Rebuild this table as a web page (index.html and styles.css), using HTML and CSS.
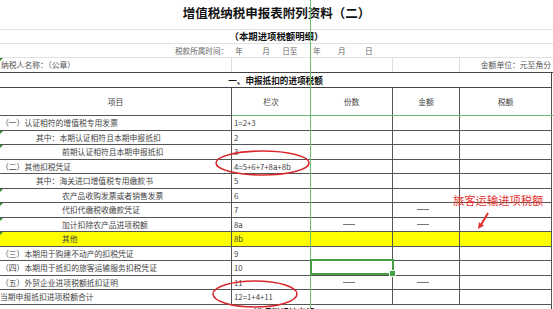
FILE: index.html
```html
<!DOCTYPE html>
<html lang="zh">
<head>
<meta charset="utf-8">
<link rel="stylesheet" href="styles.css">
</head>
<body>
<div class="page">
  <div class="title">增值税纳税申报表附列资料（二）</div>
  <div class="subtitle">（本期进项税额明细）</div>
  <div class="period">
    <span>税款所属时间：</span><span class="p1">年</span><span class="p2">月</span><span class="p3">日至</span><span class="p4">年</span><span class="p5">月</span><span class="p6">日</span>
  </div>
  <div class="info">
    <div class="mark">纳税人名称：（公章）</div>
    <div></div>
    <div></div>
    <div class="right">金额单位：元至角分</div>
  </div>
  <div class="section">一、申报抵扣的进项税额</div>
  <div class="table">
    <div class="hd">项目</div><div class="hd">栏次</div><div class="hd">份数</div><div class="hd">金额</div><div class="hd">税额</div>

    <div class="l0">（一）认证相符的增值税专用发票</div><div class="no">1=2+3</div><div></div><div></div><div></div>
    <div class="l1 mark">其中：本期认证相符且本期申报抵扣</div><div class="no">2</div><div></div><div></div><div></div>
    <div class="l2 mark">前期认证相符且本期申报抵扣</div><div class="no">3</div><div></div><div></div><div></div>
    <div class="l0">（二）其他扣税凭证</div><div class="no">4=5+6+7+8a+8b</div><div></div><div></div><div></div>
    <div class="l1">其中：海关进口增值税专用缴款书</div><div class="no">5</div><div></div><div></div><div></div>
    <div class="l2 mark">农产品收购发票或者销售发票</div><div class="no">6</div><div></div><div></div><div></div>
    <div class="l2 mark">代扣代缴税收缴款凭证</div><div class="no">7</div><div></div><div class="c"><span class="dash"></span></div><div></div>
    <div class="l2 mark">加计扣除农产品进项税额</div><div class="no">8a</div><div class="c"><span class="dash"></span></div><div class="c"><span class="dash"></span></div><div></div>
    <div class="l2 mark y">其他</div><div class="no y">8b</div><div class="y"></div><div class="y"></div><div class="y"></div>
    <div class="l0">（三）本期用于购建不动产的扣税凭证</div><div class="no">9</div><div></div><div></div><div></div>
    <div class="l0">（四）本期用于抵扣的旅客运输服务扣税凭证</div><div class="no">10</div><div></div><div></div><div></div>
    <div class="l0">（五）外贸企业进项税额抵扣证明</div><div class="no">11</div><div class="c"><span class="dash"></span></div><div class="c"><span class="dash"></span></div><div></div>
    <div class="lt">当期申报抵扣进项税额合计</div><div class="no">12=1+4+11</div><div></div><div></div><div></div>
  </div>
  <div class="section">二、进项税额转出额</div>

  <div class="freeze-v"></div>
  <div class="freeze-h"></div>
  <div class="selected"></div>
  <div class="note">旅客运输进项税额</div>
  <svg class="marks" width="553" height="309" viewBox="0 0 553 309">
    <ellipse cx="262.5" cy="163" rx="46.5" ry="12" fill="none" stroke="#d8282c" stroke-width="1.6"/>
    <ellipse cx="255" cy="294" rx="42" ry="13" fill="none" stroke="#d8282c" stroke-width="1.6"/>
    <line x1="488" y1="213" x2="481.5" y2="224" stroke="#e0302c" stroke-width="2"/>
    <polygon points="478,229 484,225.5 479,222.3" fill="#e0302c"/>
  </svg>
</div>
</body>
</html>
```
FILE: styles.css
```css
* { box-sizing: border-box; margin: 0; padding: 0; }
body {
  margin: 0;
  background: #fff;
  font-family: "Noto Sans CJK SC", "Noto Sans", sans-serif;
  color: #444;
}
.page {
  position: relative;
  width: 553px;
  height: 309px;
  overflow: hidden;
}
.title {
  height: 30px;
  border-bottom: 1px solid #e2e2e2;
  text-align: center;
  font-size: 12.5px;
  font-weight: 700;
  line-height: 26px;
  color: #111;
}
.subtitle {
  height: 14px;
  border-bottom: 1px solid #e2e2e2;
  text-align: center;
  font-size: 9.4px;
  font-weight: 700;
  line-height: 13px;
  color: #111;
}
.period {
  position: relative;
  height: 14px;
  border-bottom: 1px solid #e2e2e2;
  display: flex;
  padding-left: 175px;
  font-size: 7.6px;
  line-height: 14px;
  color: #666;
}
.period .p1 { margin-left: 7px; }
.period .p2 { margin-left: 19.4px; }
.period .p3 { margin-left: 12.4px; }
.period .p4 { margin-left: 15.8px; }
.period .p5 { margin-left: 17.4px; }
.period .p6 { margin-left: 19.4px; }
.info {
  display: grid;
  grid-template-columns: 232px 161px 67px 92px;
  height: 15px;
  border-bottom: 1px solid #444;
}
.info > div {
  position: relative;
  border-right: 1px solid #ddd;
  font-size: 7.8px;
  line-height: 14px;
  padding-left: 1px;
  white-space: nowrap;
  color: #555;
}
.info > div.right { text-align: right; padding-right: 1px; border-right: none; }
.section {
  width: 552px;
  height: 15px;
  border-bottom: 1px solid #444;
  border-right: 1px solid #444;
  text-align: center;
  font-weight: 700;
  font-size: 8.6px;
  line-height: 14px;
  color: #111;
}
.table {
  display: grid;
  grid-template-columns: 232px 79px 82px 67px 92px;
  grid-template-rows: 28px;
  grid-auto-rows: 14.5px;
}
.table > div {
  position: relative;
  border-right: 1px solid #555;
  border-bottom: 1px solid #555;
  font-size: 7.8px;
  line-height: 13.5px;
  white-space: nowrap;
  color: #444;
}
.table > div.hd {
  text-align: center;
  line-height: 27px;
}
.l0 { padding-left: 1px; }
.l1 { padding-left: 36px; }
.l2 { padding-left: 62px; }
.lt { padding-left: 0; }
.no { padding-left: 2px; }
.y { background: #ffff00; }
.c { display: flex; align-items: center; justify-content: center; }
.dash {
  display: block;
  width: 12px;
  height: 1px;
  background: #777;
  margin-left: -6px;
}
.mark::before {
  content: "";
  position: absolute;
  left: 0;
  top: 0;
  border-top: 3px solid #2e8b2e;
  border-right: 3px solid transparent;
}
.freeze-v {
  position: absolute;
  left: 310px;
  top: 0;
  width: 1px;
  height: 309px;
  background: #6dbb6d;
}
.freeze-h {
  position: absolute;
  left: 232px;
  top: 115px;
  width: 321px;
  height: 1px;
  background: #6dbb6d;
}
.selected {
  position: absolute;
  left: 310px;
  top: 259px;
  width: 84px;
  height: 16px;
  border: 2px solid #45a045;
}
.selected::after {
  content: "";
  position: absolute;
  right: -4px;
  bottom: -4px;
  width: 5px;
  height: 5px;
  background: #45a045;
  border: 1px solid #fff;
}
.note {
  position: absolute;
  left: 453px;
  top: 194px;
  font-size: 11.3px;
  line-height: 13px;
  color: #e5332f;
  white-space: nowrap;
}
.marks {
  position: absolute;
  left: 0;
  top: 0;
  pointer-events: none;
}
```
